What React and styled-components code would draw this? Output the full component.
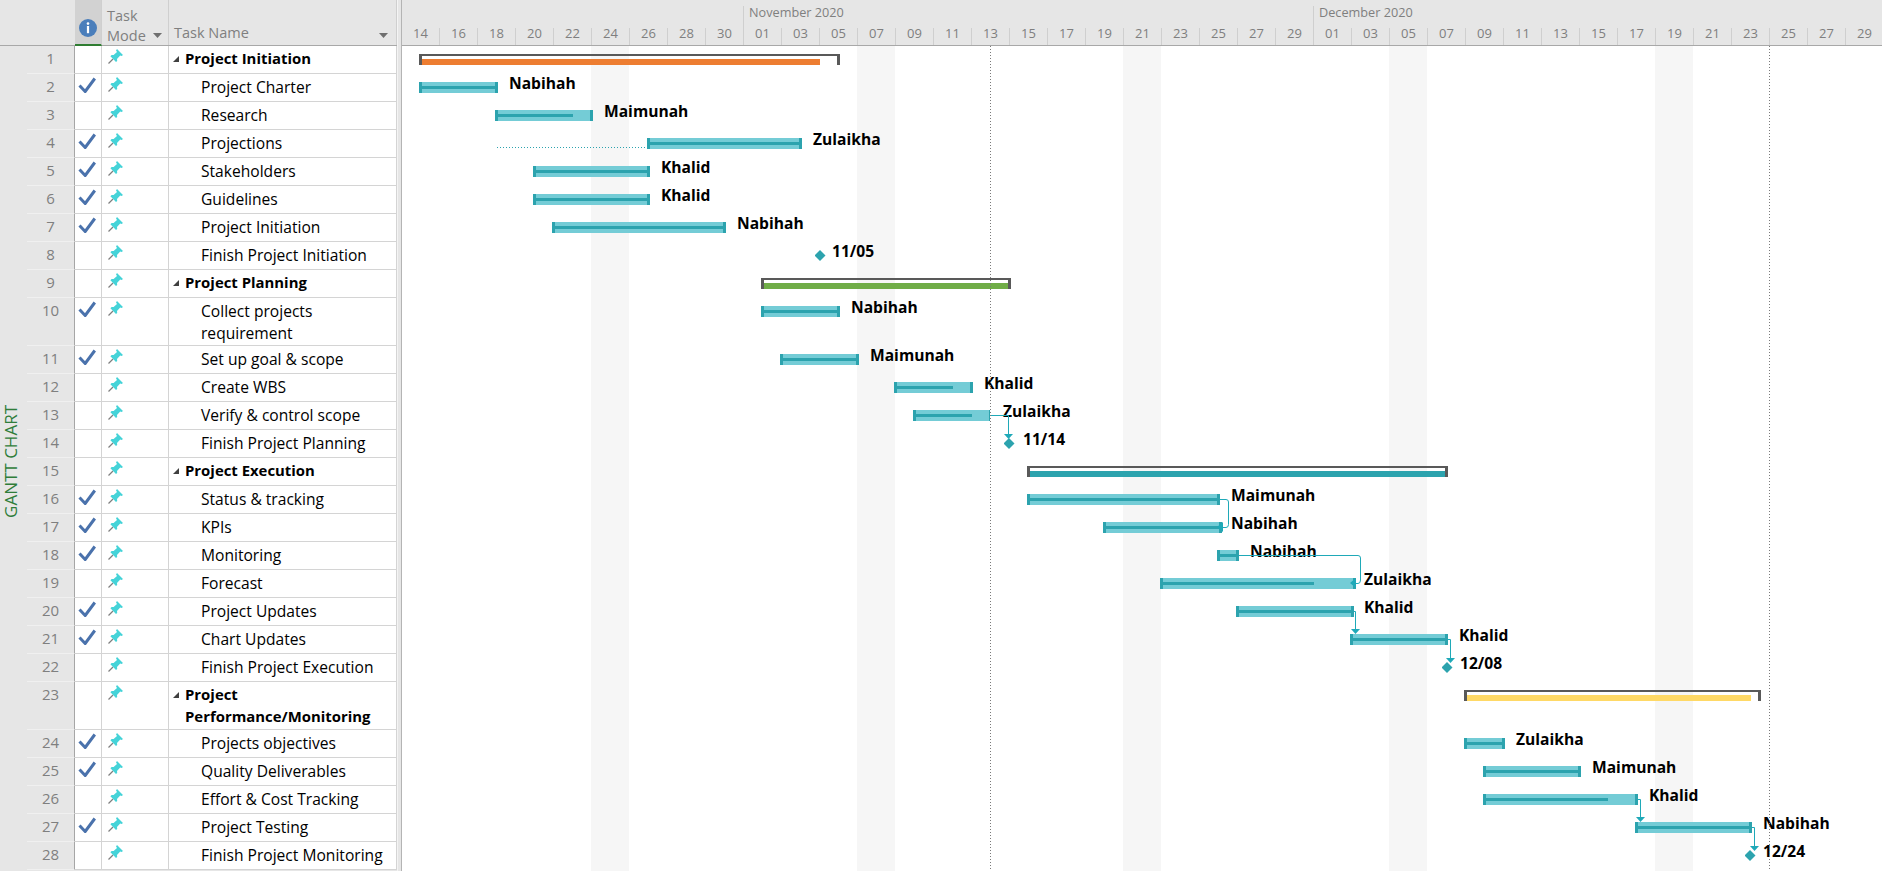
import styled, { createGlobalStyle } from "styled-components"

const CHART_LEFT = 402
const FONT = `"Open Sans", "Noto Sans", sans-serif`

const TASKS = [
    { name: "Project Initiation", summary: "#ED7D31", bar: [419, 840, 820] },
    { name: "Project Charter", done: true, bar: [419, 498], label: [509, "Nabihah"] },
    { name: "Research", bar: [495, 593, 573], label: [604, "Maimunah"] },
    { name: "Projections", done: true, bar: [647, 802], label: [813, "Zulaikha"] },
    { name: "Stakeholders", done: true, bar: [533, 650], label: [661, "Khalid"] },
    { name: "Guidelines", done: true, bar: [533, 650], label: [661, "Khalid"] },
    { name: "Project Initiation", done: true, bar: [552, 726], label: [737, "Nabihah"] },
    { name: "Finish Project Initiation", milestone: 820, label: [832, "11/05"] },
    { name: "Project Planning", summary: "#70AD47", bar: [761, 1011, 1008] },
    { name: "Collect projects requirement", done: true, tall: true, bar: [761, 840], label: [851, "Nabihah"] },
    { name: "Set up goal & scope", done: true, bar: [780, 859], label: [870, "Maimunah"] },
    { name: "Create WBS", bar: [894, 973, 953], label: [984, "Khalid"] },
    { name: "Verify & control scope", bar: [913, 990, 972], thinEnd: true, label: [1003, "Zulaikha"] },
    { name: "Finish Project Planning", milestone: 1009, label: [1023, "11/14"] },
    { name: "Project Execution", summary: "#2CA3AE", bar: [1027, 1448, 1445] },
    { name: "Status & tracking", done: true, bar: [1027, 1220], label: [1231, "Maimunah"] },
    { name: "KPIs", done: true, bar: [1103, 1222], label: [1231, "Nabihah"] },
    { name: "Monitoring", done: true, bar: [1217, 1239], label: [1250, "Nabihah"] },
    { name: "Forecast", bar: [1160, 1356, 1314], label: [1364, "Zulaikha"] },
    { name: "Project Updates", done: true, bar: [1236, 1354], label: [1364, "Khalid"] },
    { name: "Chart Updates", done: true, bar: [1350, 1448], label: [1459, "Khalid"] },
    { name: "Finish Project Execution", milestone: 1447, label: [1460, "12/08"] },
    { name: "Project Performance/Monitoring", summary: "#FFD966", tall: true, bar: [1464, 1761, 1751] },
    { name: "Projects objectives", done: true, bar: [1464, 1505], label: [1516, "Zulaikha"] },
    { name: "Quality Deliverables", done: true, bar: [1483, 1581], label: [1592, "Maimunah"] },
    { name: "Effort & Cost Tracking", bar: [1483, 1638, 1608], label: [1649, "Khalid"] },
    { name: "Project Testing", done: true, bar: [1635, 1752], label: [1763, "Nabihah"] },
    { name: "Finish Project Monitoring", milestone: 1750, label: [1763, "12/24"] },
]

const OCT_DAYS = ["14", "16", "18", "20", "22", "24", "26", "28", "30"]
const MONTH_DAYS = ["01", "03", "05", "07", "09", "11", "13", "15", "17", "19", "21", "23", "25", "27", "29"]
const DAYS = [...OCT_DAYS, ...MONTH_DAYS, ...MONTH_DAYS]
const BANDS = [591, 857, 1123, 1389, 1655]
const TODAY_LINES = [990, 1769]

const CONNECTORS = [
    { line: "M990 415.5H1008.5V435", head: "1004,434 1013,434 1008.5,439" },
    { line: "M1220 499.5H1226Q1228.5 499.5 1228.5 502V524.5Q1228.5 527.5 1226 527.5H1222", head: "1223,522 1223,532 1217,527" },
    { line: "M1239 555.5H1358Q1360.5 555.5 1360.5 558V580Q1360.5 583.5 1358 583.5H1355", head: "1356,578 1356,588 1350,583" },
    { line: "M1354 611.5H1355.5V630", head: "1351,629 1360,629 1355.5,634" },
    { line: "M1448 639.5H1450.5V659", head: "1446,658 1455,658 1450.5,663" },
    { line: "M1638 799.5H1640.5V818", head: "1636,817 1645,817 1640.5,822" },
    { line: "M1752 827.5H1754.5V847", head: "1750,846 1759,846 1754.5,851" },
]

const GlobalStyle = createGlobalStyle`
    html, body {
        margin: 0;
        padding: 0;
        background: #fff;
    }
    body {
        font-family: ${FONT};
        overflow: hidden;
    }
`

const Page = styled.div`
    width: 1882px;
    height: 871px;
    display: flex;
    overflow: hidden;
    font-size: 14.5px;
`

const SheetPane = styled.div`
    width: 397px;
    flex: none;
    display: flex;
    flex-direction: column;
    background: #e6e6e6;
`

const Splitter = styled.div`
    width: 5px;
    flex: none;
    background: #e6e6e6;
    border-left: 1px solid #f4f4f4;
    border-right: 1px solid #b4b4b4;
    box-sizing: border-box;
`

const SheetHeader = styled.div`
    height: 46px;
    flex: none;
    display: grid;
    grid-template-columns: 75px 27px 67px 1fr;
    box-sizing: border-box;
    border-bottom: 1px solid #a8a8a8;
    color: #7f7f7f;
    line-height: 20px;
`

const InfoHead = styled.div`
    height: 46px;
    box-sizing: border-box;
    background: #d2d2d2;
    border-bottom: 2px solid #2f7d32;
    border-right: 1px solid #cfcfcf;
    padding: 19px 0 0 4px;
`

const ModeHead = styled.div`
    position: relative;
    height: 45px;
    box-sizing: border-box;
    border-right: 1px solid #cfcfcf;
    padding: 6px 0 0 5px;
`

const NameHead = styled.div`
    position: relative;
    height: 45px;
    box-sizing: border-box;
    border-right: 1px solid #cfcfcf;
    padding: 23px 0 0 5px;
`

const SortArrow = styled.span`
    position: absolute;
    top: 33px;
    right: ${props => props.$right}px;
    width: 9px;
    height: 5px;
    background: #6f6f6f;
    clip-path: polygon(0 0, 100% 0, 50% 100%);
`

const SheetBody = styled.div`
    flex: 1;
    display: flex;
`

const SideTitle = styled.div`
    width: 27px;
    flex: none;
    display: flex;
    align-items: center;
    justify-content: center;

    span {
        writing-mode: vertical-rl;
        transform: rotate(180deg);
        color: #2f7d3a;
        font-size: 17px;
        line-height: 20px;
        white-space: nowrap;
        position: relative;
        left: -3px;
        top: 3px;
    }
`

const Rows = styled.div`
    flex: 1;
`

const SheetRow = styled.div`
    height: ${props => props.$tall ? 48 : 28}px;
    display: grid;
    grid-template-columns: 48px 27px 67px 1fr;
    box-sizing: border-box;
`

const NumCell = styled.div`
    background: #e6e6e6;
    color: #7f7f7f;
    font-size: 15px;
    text-align: center;
    line-height: 22px;
    padding-top: 1px;
    box-sizing: border-box;
    border-right: 1px solid #a6a6a6;
    border-bottom: 1px solid #f0f0f0;
`

const Cell = styled.div`
    background: #fff;
    box-sizing: border-box;
    border-right: 1px solid #d4d4d4;
    border-bottom: 1px solid #d4d4d4;
`

const CheckCell = styled(Cell)`
    padding: 3px 0 0 3px;
`

const ModeCell = styled(Cell)`
    padding: 3px 0 0 6px;
`

const NameCell = styled(Cell)`
    display: flex;
    align-items: flex-start;
    padding: ${props => props.$summary ? 1 : 2}px 6px 0 ${props => props.$summary ? 4 : 32}px;
    color: #000;
    font-size: ${props => props.$summary ? 14.9 : 15.6}px;
    font-weight: ${props => props.$summary ? 700 : 400};
    line-height: 22px;
`

const Twist = styled.span`
    width: 6px;
    height: 6px;
    flex: none;
    margin: 9px 6px 0 0;
    background: #404040;
    clip-path: polygon(100% 0, 100% 100%, 0 100%);
`

const ChartPane = styled.div`
    flex: 1;
    display: flex;
    flex-direction: column;
    min-width: 0;
`

const Timescale = styled.div`
    height: 46px;
    flex: none;
    background: #e6e6e6;
    border-bottom: 1px solid #a8a8a8;
    box-sizing: border-box;
    color: #7f7f7f;
    font-size: 13px;
    overflow: hidden;
`

const MonthTier = styled.div`
    height: 28px;
    display: flex;
    font-size: 12.7px;
`

const MonthCell = styled.div`
    width: ${props => props.$width}px;
    flex: none;
    margin-top: 6px;
    box-sizing: border-box;
    padding-left: 5px;
    line-height: 13px;
    border-left: ${props => props.$blank ? "none" : "1px solid #cfcfcf"};
`

const DayTier = styled.div`
    height: 17px;
    display: flex;
`

const DayCell = styled.div`
    width: 38px;
    flex: none;
    box-sizing: border-box;
    text-align: center;
    line-height: 10px;
    border-right: 1px solid #cfcfcf;
`

const ChartBody = styled.div`
    position: relative;
    flex: 1;
    background: #fff;
    overflow: hidden;
`

const Band = styled.div`
    position: absolute;
    top: 0;
    bottom: 0;
    width: 38px;
    background: #f6f6f6;
`

const TodayLine = styled.div`
    position: absolute;
    top: 0;
    bottom: 0;
    width: 1px;
    background: repeating-linear-gradient(to bottom, #7a7a7a 0 1px, transparent 1px 3px);
`

const ChartRow = styled.div`
    position: relative;
    height: ${props => props.$tall ? 48 : 28}px;
`

const TaskBar = styled.div`
    position: absolute;
    top: 8px;
    height: 11px;
    box-sizing: border-box;
    background: #74ccd6;
    border-left: 3px solid #2ca3ae;
    border-right: ${props => props.$thinEnd ? 1 : 3}px solid #2ca3ae;
`

const Progress = styled.div`
    position: absolute;
    top: 4px;
    left: 0;
    height: 3px;
    background: #2ca3ae;
`

const SummaryBar = styled.div`
    position: absolute;
    top: 8px;
    height: 11px;
    box-sizing: border-box;
    border: 3px solid #595959;
    border-top-width: 2px;
    border-bottom: none;
`

const SummaryFill = styled.div`
    position: absolute;
    top: 3px;
    left: 0;
    height: 6px;
    background: ${props => props.$color};
`

const Diamond = styled.div`
    position: absolute;
    top: 8px;
    width: 11px;
    height: 11px;
    background: #2ca3ae;
    clip-path: polygon(50% 0, 100% 50%, 50% 100%, 0 50%);
`

const BarLabel = styled.div`
    position: absolute;
    top: -1px;
    font-size: 15.6px;
    font-weight: 700;
    line-height: 20px;
    color: #000;
    white-space: nowrap;
`

const ConnectorLayer = styled.svg`
    position: absolute;
    top: 0;
    left: 0;
    pointer-events: none;
`

function InfoIcon() {
    return (
        <svg width="18" height="18" viewBox="0 0 18 18">
            <circle cx="9" cy="9" r="9" fill="#4a7ebb" />
            <circle cx="9" cy="4.6" r="1.3" fill="#fff" />
            <rect x="7.9" y="7" width="2.2" height="7.2" fill="#fff" />
        </svg>
    )
}

function CheckIcon() {
    return (
        <svg width="18" height="16" viewBox="0 0 18 16" style={{ display: "block" }}>
            <path d="M1.5 8.5L7.2 14.5L16.8 1.5" fill="none" stroke="#4a72ac" strokeWidth="3" />
        </svg>
    )
}

function PinIcon() {
    return (
        <svg width="15" height="15" viewBox="0 0 15 15" style={{ display: "block" }}>
            <path d="M0.5 14.5L5 10" stroke="#7f7f7f" strokeWidth="1.3" />
            <path d="M9 0L15 6L13.6 7.1L12.2 6.6L9 10L9.2 12L8 13L2.4 7.2L3.6 6L5.6 6.1L9 3L8 1.4Z" fill="#45d3d8" />
        </svg>
    )
}

function ChartLine({ task }) {
    const { bar, summary, thinEnd, milestone, label, tall } = task
    return (
        <ChartRow $tall={tall}>
            {bar && summary && (
                <SummaryBar style={{ left: bar[0] - CHART_LEFT, width: bar[1] - bar[0] }}>
                    <SummaryFill $color={summary} style={{ width: bar[2] - bar[0] - 3 }} />
                </SummaryBar>
            )}
            {bar && !summary && (
                <TaskBar $thinEnd={thinEnd} style={{ left: bar[0] - CHART_LEFT, width: bar[1] - bar[0] }}>
                    <Progress style={{ width: (bar[2] || bar[1] - 3) - bar[0] - 3 }} />
                </TaskBar>
            )}
            {milestone && <Diamond style={{ left: milestone - CHART_LEFT - 5.5 }} />}
            {label && <BarLabel style={{ left: label[0] - CHART_LEFT }}>{label[1]}</BarLabel>}
        </ChartRow>
    )
}

export default function App() {
    return (
        <Page>
            <GlobalStyle />
            <SheetPane>
                <SheetHeader>
                    <div />
                    <InfoHead><InfoIcon /></InfoHead>
                    <ModeHead>
                        Task<br />Mode
                        <SortArrow $right={6} />
                    </ModeHead>
                    <NameHead>
                        Task Name
                        <SortArrow $right={8} />
                    </NameHead>
                </SheetHeader>
                <SheetBody>
                    <SideTitle><span>GANTT CHART</span></SideTitle>
                    <Rows>
                        {TASKS.map((task, index) => (
                            <SheetRow key={index} $tall={task.tall}>
                                <NumCell>{index + 1}</NumCell>
                                <CheckCell>{task.done && <CheckIcon />}</CheckCell>
                                <ModeCell><PinIcon /></ModeCell>
                                <NameCell $summary={task.summary}>
                                    {task.summary && <Twist />}
                                    <span>{task.name}</span>
                                </NameCell>
                            </SheetRow>
                        ))}
                    </Rows>
                </SheetBody>
            </SheetPane>
            <Splitter />
            <ChartPane>
                <Timescale>
                    <MonthTier>
                        <MonthCell $width={341} $blank />
                        <MonthCell $width={570}>November 2020</MonthCell>
                        <MonthCell $width={570}>December 2020</MonthCell>
                    </MonthTier>
                    <DayTier>
                        {DAYS.map((day, index) => <DayCell key={index}>{day}</DayCell>)}
                    </DayTier>
                </Timescale>
                <ChartBody>
                    {BANDS.map(x => <Band key={x} style={{ left: x - CHART_LEFT }} />)}
                    {TASKS.map((task, index) => <ChartLine key={index} task={task} />)}
                    <ConnectorLayer width="1480" height="825" viewBox="402 46 1480 825">
                        <path d="M497 147.5H647" fill="none" stroke="#2ca3ae" strokeDasharray="1 2" />
                        {CONNECTORS.map((item, index) => (
                            <g key={index}>
                                <path d={item.line} fill="none" stroke="#1fa9b8" />
                                <polygon points={item.head} fill="#1fa9b8" />
                            </g>
                        ))}
                    </ConnectorLayer>
                    {TODAY_LINES.map(x => <TodayLine key={x} style={{ left: x - CHART_LEFT }} />)}
                </ChartBody>
            </ChartPane>
        </Page>
    )
}
